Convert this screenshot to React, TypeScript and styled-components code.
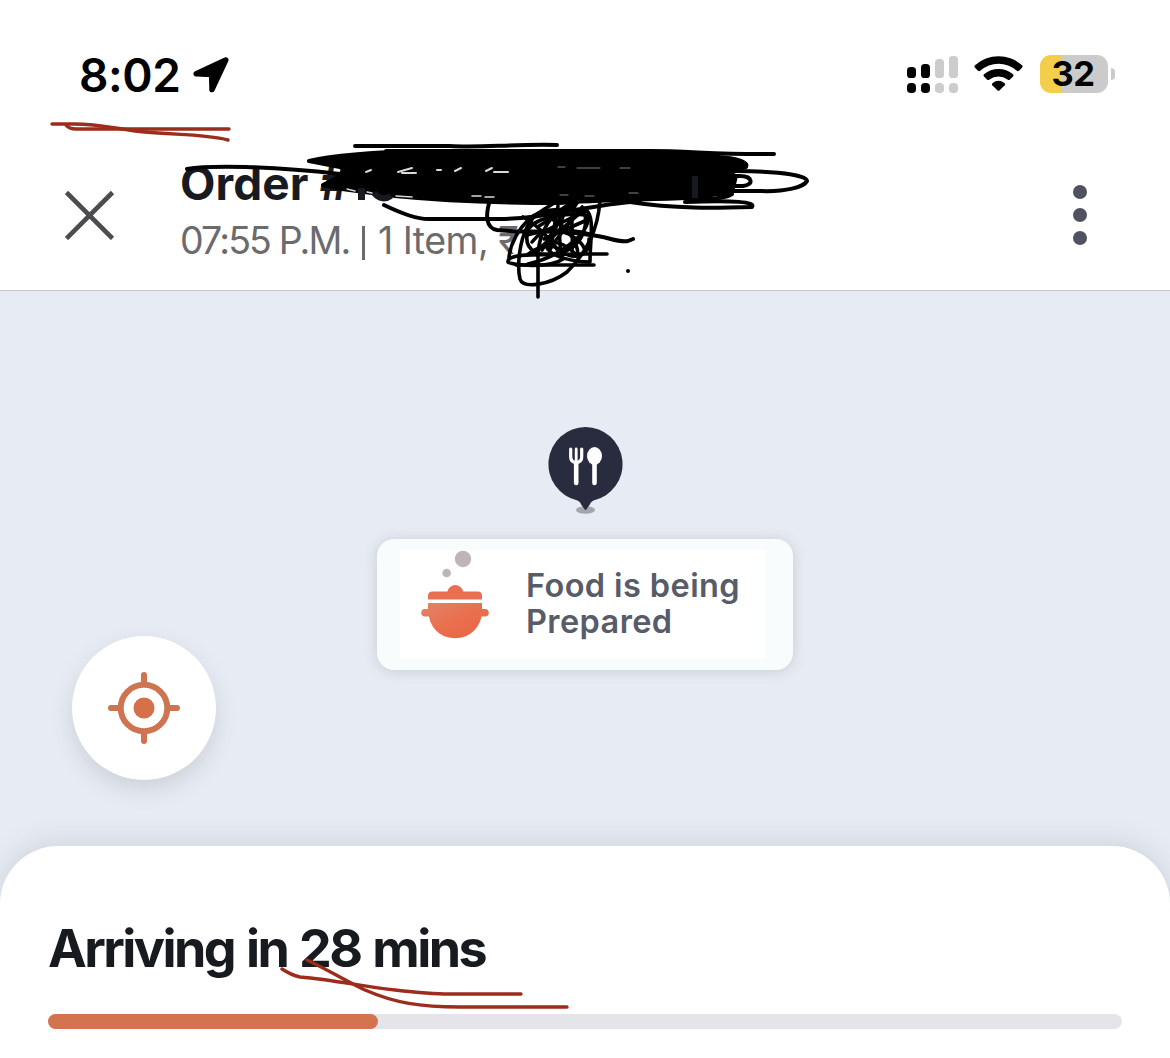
import React from 'react';
import styled, {createGlobalStyle} from 'styled-components';

const GlobalStyle = createGlobalStyle`
    * {
        box-sizing: border-box;
    }

    body {
        margin: 0;
        background-color: #FFF;
        font-family: Inter, "Liberation Sans", sans-serif;
    }
`;

function SignalIcon() {
    const heights = [11, 14, 19, 22];
    return (
        <svg width="51" height="38" viewBox="0 0 51 38">
            {heights.map((h, i) => (
                <g key={i} fill={i < 2 ? '#000' : '#CCC'}>
                    <rect x={i * 14} y={23 - h} width="9" height={h} rx="3.6" />
                    <rect x={i * 14} y="28" width="9" height="10" rx="3.8" />
                </g>
            ))}
        </svg>
    );
}

function WifiIcon() {
    return (
        <svg width="50" height="38" viewBox="0 0 50 38">
            <path d="M1 12.7Q-.2 11.4 1 10.3A35 35 0 0 1 48 10.3Q49.200 11.400 48 12.700L45 15.700Q43.800 16.700 42.500 15.600A27 27 0 0 0 6.500 15.600Q5.200 16.700 4 15.700Z" />
            <path d="M10 21.600Q8.800 20.400 10 19.200A22.500 22.500 0 0 1 39 19.200Q40.200 20.400 39 21.600L36 24.600Q34.800 25.600 33.500 24.600A14.500 14.500 0 0 0 15.500 24.600Q14.200 25.600 13 24.600Z" />
            <path d="M18.300 30.200Q17.200 29 18.600 27.900A10 10 0 0 1 30.400 27.900Q31.800 29 30.700 30.200L25.700 35.200Q24.500 36.200 23.300 35.200Z" />
        </svg>
    );
}

function LocationArrow() {
    return (
        <svg width="38" height="38" viewBox="0 0 38 38" stroke="#000" strokeWidth="5.400" strokeLinejoin="round">
            <path d="M32.800 4L3.200 17.800L18.600 18.600L19 33.600Z" />
            <path d="M30 6L5 18H19V32.500L32 6Z" strokeWidth="4" />
        </svg>
    );
}

function PotIcon() {
    return (
        <svg width="68" height="90" viewBox="0 0 68 90">
            <defs>
                <linearGradient id="pot" x1="0" y1="0" x2="1" y2="1">
                    <stop offset="0" stopColor="#E08468" />
                    <stop offset=".5" stopColor="#E96F4E" />
                    <stop offset="1" stopColor="#E86442" />
                </linearGradient>
            </defs>
            <circle cx="42" cy="9" r="8.200" fill="#BDB5B6" />
            <circle cx="25.700" cy="23" r="4.300" fill="#BDB5B6" />
            <path d="M7 49.500V46Q7 41.500 11.500 41.500H26.300A8.200 8.200 0 0 1 42.300 41.500H57Q61 41.500 61 46V49.500Z" fill="#E96F50" />
            <path d="M7 53H61V59H64A3.800 3.800 0 0 1 64 66.600H60.500C58 79 48 88.300 34.200 88.300S10 79 8 66.600H4A3.800 3.800 0 0 1 4 59H7Z" fill="url(#pot)" />
        </svg>
    );
}

function RestaurantPin() {
    return (
        <svg width="80" height="92" viewBox="-.5 0 80 92">
            <ellipse cx="40" cy="85" rx="9.500" ry="3.800" fill="#A3A6AD" />
            <path d="M40 2A37.200 37.200 0 0 1 48 75.500Q45 76.500 44 80L40.700 84.500Q40 85.500 39.300 84.500L36 80Q35 76.500 32 75.500A37.200 37.200 0 0 1 40 2Z" fill="#292B3F" />
            <g fill="none" stroke="#FFF" strokeLinecap="round">
                <path d="M25.200 24V32Q25.200 37.300 30.700 37.300T36.200 32V24" strokeWidth="3.200" />
                <path d="M30.700 24V35" strokeWidth="2.800" />
                <path d="M30.700 38V58M49 38V58" strokeWidth="4.600" />
            </g>
            <ellipse cx="49" cy="31" rx="7.500" ry="9" fill="#FFF" />
        </svg>
    );
}

function TargetIcon() {
    return (
        <svg width="72" height="72" viewBox="0 0 72 72" fill="none" stroke="#CF7451" strokeLinecap="round">
            <circle cx="36" cy="36" r="23.300" strokeWidth="6" />
            <circle cx="36" cy="36" r="10.500" fill="#D5714A" stroke="none" />
            <path d="M36 3V12M36 60V69M3 36H12M60 36H69" strokeWidth="6" />
        </svg>
    );
}

function PenMarks() {
    return (
        <Ink viewBox="0 0 1170 1058">
            <g stroke="#9C2C1B" strokeWidth="3.400">
                <path d="M52 124H70C98 123 120 130 145 132C175 135 205 134 228 140" />
                <path d="M66 125Q69 129 76 129H229" />
                <path d="M282 969Q291 975 300 977C335 980 365 987 395 990Q430 994 450 994H521" />
                <path d="M307 960C330 971 350 983 365 990C395 1003 420 1007 460 1007H567" />
            </g>
            <g stroke="#000" strokeWidth="4">
                <path d="M355 146H450C480 148 510 144 557 145" />
                <path d="M187 169C210 165 270 166 340 174" />
                <path d="M386 151H650C690 151 720 155 774 154" />
                <path d="M309 161C340 154 380 152 420 151H640L718 157C736 158 748 162 746 167L724 171L736 176L732 192L690 198C630 200 590 200 560 203C500 203 435 200 395 196L342 189L323 185L340 176L345 168Z" fill="#000" />
                <path d="M660 158C710 156 750 160 746 166C735 172 690 171 650 170" />
                <path d="M650 172H700C765 169 807 174 807 181C804 187 786 192 760 191H640" />
                <path d="M660 176H740C753 176 754 185 743 186H650M680 182H734M670 194H732Q723 200 690 199" />
                <path d="M384 205Q415 220 430 219H500C545 219 580 206 640 201M490 200C485 216 486 228 497 230C530 234 555 228 590 235C607 236 617 243 628 241L633 239" />
                <path d="M630 202C675 209 715 208 752 207C756 202 735 200 685 202" />
            </g>
            <g stroke="#000" strokeWidth="3.600">
                <path d="M538 297V255C539 230 552 213 570 204" />
                <path d="M600 200C598 230 587 252 567 272C550 285 523 289 520 279C517 266 519 242 528 225C534 214 545 209 554 203" />
                <path d="M523 217C539 225 557 247 563 259C549 269 512 265 508 262C507 253 536 255 577 254H607" />
                <path d="M509 257C511 240 520 228 529 219C545 205 568 211 586 210C595 217 590 239 590 262C574 262 552 257 547 248C550 239 564 241 578 257" />
                <path d="M516 265H594M528 264C560 257 590 233 588 216C577 211 535 216 528 230C522 252 540 260 568 250C584 242 590 221 582 207" />
                <path d="M551 248C553 225 565 205 574 203M561 251C557 232 563 212 569 202M572 250C574 233 568 213 577 203" />
                <path d="M539 226L576 204M539 234L585 211M544 239L587 220M535 252L586 208M531 217L570 209M532 242C550 218 580 237 584 248" />
                <path d="M527 255C540 246 550 242 560 250C573 261 590 257 589 239M547 217C565 224 578 239 578 256M527 235C545 229 572 229 589 234" />
                <path d="M558 206L550 250M567 208L542 250M577 213L553 244" />
            </g>
            <circle cx="628" cy="271" r="2" fill="#000" />
            <g stroke="#171A20" strokeLinecap="butt">
                <path d="M361.500 188V200" strokeWidth="7" />
                <path d="M374 193Q382 202 391 196" strokeWidth="6" />
                <path d="M695 176V198" strokeWidth="6" />
            </g>
            <g stroke="#FFF" strokeWidth="2" opacity=".85">
                <path d="M366 172L371 170M398 172L412 168M402 173H416M437 170H441M455 171L461 168M486 171L492 168M494 172H508" />
                <path d="M347 189L355 191M367 192L372 193M396 196L412 197M472 196H481M485 197H494" strokeWidth="1.500" />
                <path d="M558 167H565M577 168H600M620 168H630M560 195H568M585 196H594M629 193H638" strokeWidth="1" opacity=".6" />
            </g>
        </Ink>
    );
}

export default function App() {
    return (
        <Screen>
            <GlobalStyle />
            <StatusBar>
                <Clock>8:02</Clock>
                <LocationArrow />
                <StatusIcons>
                    <SignalIcon />
                    <WifiIcon />
                    <Battery>
                        <BatteryBody>32</BatteryBody>
                        <BatteryTip />
                    </Battery>
                </StatusIcons>
            </StatusBar>
            <Header>
                <svg width="50" height="50" viewBox="0 0 50 50" stroke="#4C4C4E" strokeWidth="4.600">
                    <path d="M1.500 2.500L47.500 48.500M47.500 2.500L1.500 48.500" />
                </svg>
                <OrderInfo>
                    <OrderTitle>Order #</OrderTitle>
                    <OrderMeta>07:55 P.M. <Divider /> <Items>1 Item, ₹</Items></OrderMeta>
                </OrderInfo>
                <Menu>
                    <Dot />
                    <Dot />
                    <Dot />
                </Menu>
            </Header>
            <MapArea>
                <RestaurantPin />
                <StatusCard>
                    <StatusContent>
                        <PotIcon />
                        <StatusText>Food is being<br />Prepared</StatusText>
                    </StatusContent>
                </StatusCard>
                <LocateButton aria-label="Locate">
                    <TargetIcon />
                </LocateButton>
            </MapArea>
            <Sheet>
                <Arriving>Arriving in 28 mins</Arriving>
                <Track>
                    <Progress style={{width: '30.7%'}} />
                </Track>
            </Sheet>
            <PenMarks />
        </Screen>
    );
}

const Screen = styled.div`
    position: relative;
    display: flex;
    flex-direction: column;
    width: 1170px;
    height: 1058px;
    overflow: hidden;
    background-color: #FFF;
`;

const StatusBar = styled.div`
    display: flex;
    align-items: center;
    height: 150px;
    padding: 0 55px 0 79px;
`;

const Clock = styled.span`
    width: 114px;
    margin-top: -1px;
    font-size: 46px;
    font-weight: 600;
    letter-spacing: -0.4px;
    white-space: nowrap;
`;

const StatusIcons = styled.div`
    display: flex;
    align-items: center;
    margin-left: auto;
    gap: 16px;
    height: 38px;
    margin-top: -2px;
`;

const Battery = styled.div`
    display: flex;
    align-items: center;
    gap: 3px;
`;

const BatteryBody = styled.div`
    width: 68px;
    height: 38px;
    padding-right: 2px;
    border-radius: 11px;
    background: linear-gradient(to right, #F3CE4B 22px, #CBCBCB 22px);
    font-size: 34.500px;
    font-weight: 650;
    line-height: 38px;
    letter-spacing: -0.6px;
    text-align: center;
`;

const BatteryTip = styled.div`
    width: 4px;
    height: 12px;
    border-radius: 0 6px 6px 0;
    background-color: #CBCBCB;
`;

const Header = styled.div`
    display: flex;
    align-items: center;
    height: 141px;
    padding: 0 83px 10px 65px;
    border-bottom: 1px solid #C3C5CA;
`;

const OrderInfo = styled.div`
    display: flex;
    flex-direction: column;
    margin: -6px 0 0 65px;
    white-space: nowrap;
`;

const OrderTitle = styled.div`
    color: #171A20;
    font-size: 46px;
    font-weight: 700;
    line-height: 56px;
    letter-spacing: 0.1px;
`;

const OrderMeta = styled.div`
    margin-top: 2px;
    color: #6B6B6D;
    font-size: 37.500px;
    line-height: 56px;
    letter-spacing: -1.85px;
`;

const Items = styled.span`
    letter-spacing: -0.5px;
`;

const Divider = styled.span`
    display: inline-block;
    width: 3px;
    height: 34px;
    margin: 0 4px 0 4px;
    vertical-align: -6px;
    background-color: #6B6B6D;
`;

const Menu = styled.div`
    display: flex;
    flex-direction: column;
    gap: 8.600px;
    margin-left: auto;
`;

const Dot = styled.span`
    width: 14px;
    height: 14px;
    border-radius: 50%;
    background-color: #50525F;
`;

const MapArea = styled.div`
    position: relative;
    display: flex;
    flex-direction: column;
    align-items: center;
    height: 625px;
    flex-shrink: 0;
    padding-top: 134px;
    background-color: #E7ECF4;
`;

const StatusCard = styled.div`
    display: flex;
    width: 416px;
    height: 131px;
    margin-top: 22px;
    padding: 11px 28px 12px 23px;
    border-radius: 17px;
    background-color: #F9FCFD;
    box-shadow: 0 1px 14px rgba(70, 75, 90, 0.2);
`;

const StatusContent = styled.div`
    display: flex;
    flex: 1;
    gap: 37px;
    padding-left: 21px;
    background-color: #FFF;
`;

const StatusText = styled.div`
    padding-top: 18px;
    color: #585B68;
    font-size: 32.500px;
    font-weight: 600;
    line-height: 36px;
    letter-spacing: 0.4px;
    white-space: nowrap;
`;

const LocateButton = styled.button`
    position: absolute;
    left: 72px;
    top: 345px;
    display: flex;
    align-items: center;
    justify-content: center;
    width: 144px;
    height: 144px;
    padding: 0;
    border: none;
    border-radius: 50%;
    background-color: #FFF;
    box-shadow: 0 9px 22px rgba(70, 75, 90, 0.17);
`;

const Sheet = styled.div`
    position: relative;
    flex: 1;
    margin-top: -70px;
    padding: 71px 48px 0;
    border-radius: 58px 58px 0 0;
    background-color: #FFF;
    box-shadow: 0 -4px 28px rgba(70, 75, 90, 0.15);
`;

const Arriving = styled.div`
    color: #171A1E;
    font-size: 52px;
    font-weight: 700;
    line-height: 64px;
    letter-spacing: -2.55px;
    word-spacing: 2px;
    white-space: nowrap;
`;

const Track = styled.div`
    height: 15px;
    margin-top: 33px;
    border-radius: 8px;
    background-color: #E4E4E9;
`;

const Progress = styled.div`
    height: 100%;
    border-radius: 8px;
    background-color: #D4734F;
`;

const Ink = styled.svg`
    position: absolute;
    inset: 0;
    width: 1170px;
    height: 1058px;
    fill: none;
    stroke-linecap: round;
    stroke-linejoin: round;
    pointer-events: none;
`;
